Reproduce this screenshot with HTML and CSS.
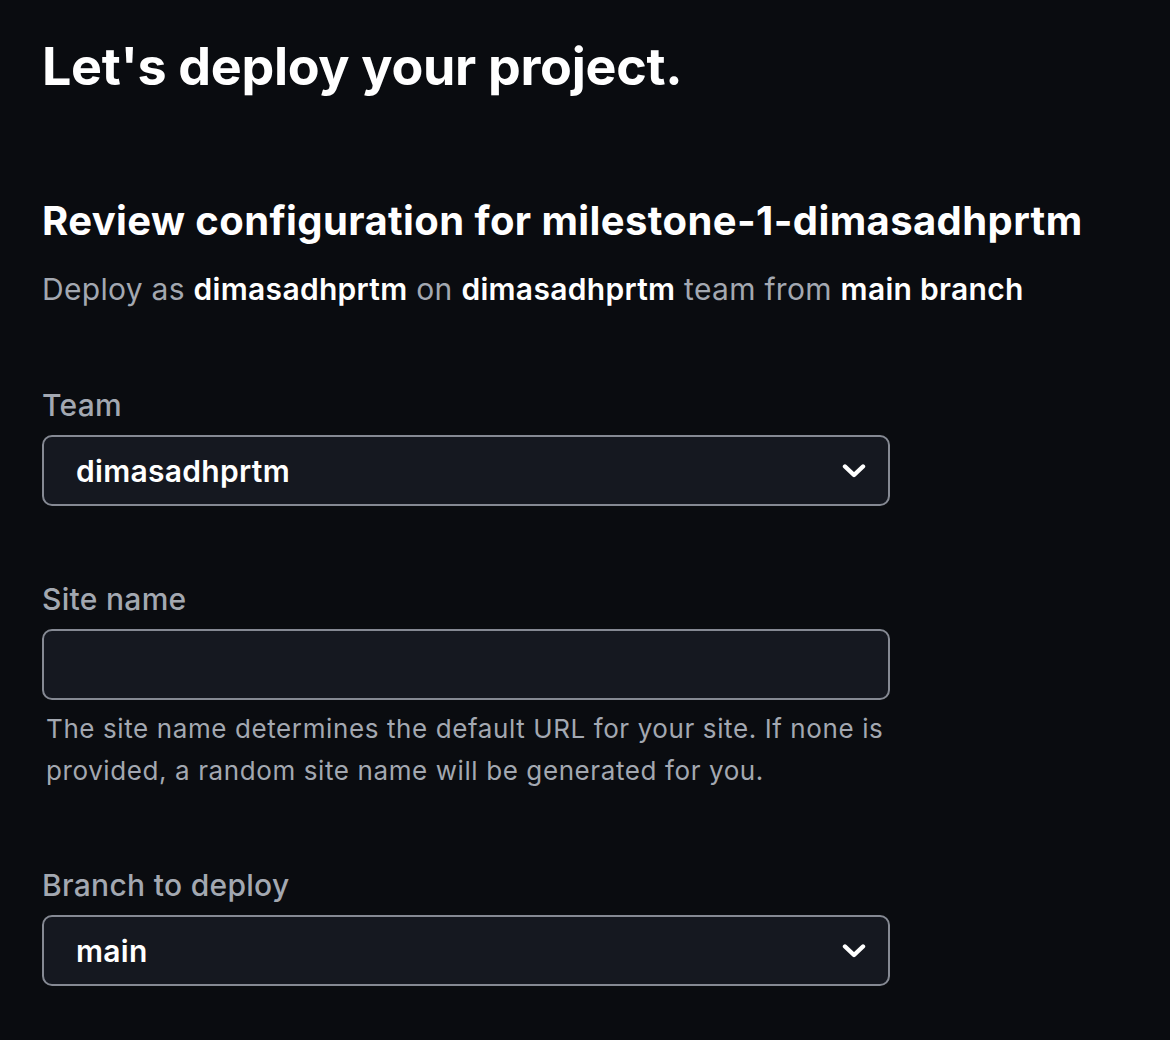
FILE: index.html
```html
<!DOCTYPE html>
<html lang="en">
<head>
<meta charset="utf-8">
<title>Deploy project</title>
<link rel="stylesheet" href="styles.css">
</head>
<body>
<main class="page">
  <h1 class="title">Let's deploy your project.</h1>
  <section class="review">
    <h2 class="review-title">Review configuration for milestone-1-dimasadhprtm</h2>
    <p class="review-sub">Deploy as <strong>dimasadhprtm</strong> on <strong>dimasadhprtm</strong> team from <strong>main branch</strong></p>
  </section>
  <form class="form">
    <div class="field">
      <label class="label">Team</label>
      <div class="control select">
        <span class="value">dimasadhprtm</span>
        <svg class="chev" viewBox="0 0 24 16" width="24" height="16"><path d="M3 3.5 L12 12 L21 3.5" fill="none" stroke="#fff" stroke-width="4.4" stroke-linecap="round" stroke-linejoin="round"/></svg>
      </div>
    </div>
    <div class="field">
      <label class="label">Site name</label>
      <div class="control input"></div>
      <p class="help">The site name determines the default URL for your site. If none is provided, a random site name will be generated for you.</p>
    </div>
    <div class="field">
      <label class="label">Branch to deploy</label>
      <div class="control select">
        <span class="value">main</span>
        <svg class="chev" viewBox="0 0 24 16" width="24" height="16"><path d="M3 3.5 L12 12 L21 3.5" fill="none" stroke="#fff" stroke-width="4.4" stroke-linecap="round" stroke-linejoin="round"/></svg>
      </div>
    </div>
  </form>
</main>
</body>
</html>
```
FILE: styles.css
```css
html, body {
  margin: 0;
  padding: 0;
  background: #0a0c10;
}
body {
  font-family: Inter, "Noto Sans", sans-serif;
  color: #ffffff;
  height: 1040px;
  overflow: hidden;
}
.page {
  padding: 36px 42px 0 42px;
}
.title {
  margin: 0;
  font-size: 52px;
  line-height: 62px;
  font-weight: 700;
  letter-spacing: -0.3px;
}
.review {
  margin-top: 100px;
}
.review-title {
  margin: 0;
  font-size: 40px;
  line-height: 46px;
  font-weight: 700;
  letter-spacing: 0.4px;
}
.review-sub {
  margin: 25px 0 0 0;
  font-size: 30px;
  line-height: 40px;
  color: #a3a8b1;
  letter-spacing: 0.3px;
}
.review-sub strong {
  color: #ffffff;
  font-weight: 600;
}
.form {
  width: 848px;
  margin-top: 76px;
}
.field {
  margin-bottom: 73px;
}
.label {
  display: block;
  font-size: 30px;
  line-height: 40px;
  font-weight: 500;
  color: #a3a8b1;
  margin-bottom: 10px;
  letter-spacing: 0.3px;
}
.control {
  box-sizing: border-box;
  height: 71px;
  border: 2px solid #858993;
  border-radius: 10px;
  background: #151820;
  display: flex;
  align-items: center;
  padding: 0 22px 0 32px;
}
.select {
  justify-content: space-between;
}
.value {
  font-size: 30px;
  font-weight: 600;
  color: #ffffff;
  letter-spacing: 0.3px;
}
.chev {
  display: block;
}
.help {
  margin: 8px 0 0 4px;
  font-size: 26px;
  line-height: 42px;
  color: #a3a8b1;
  letter-spacing: 0.6px;
}
```
